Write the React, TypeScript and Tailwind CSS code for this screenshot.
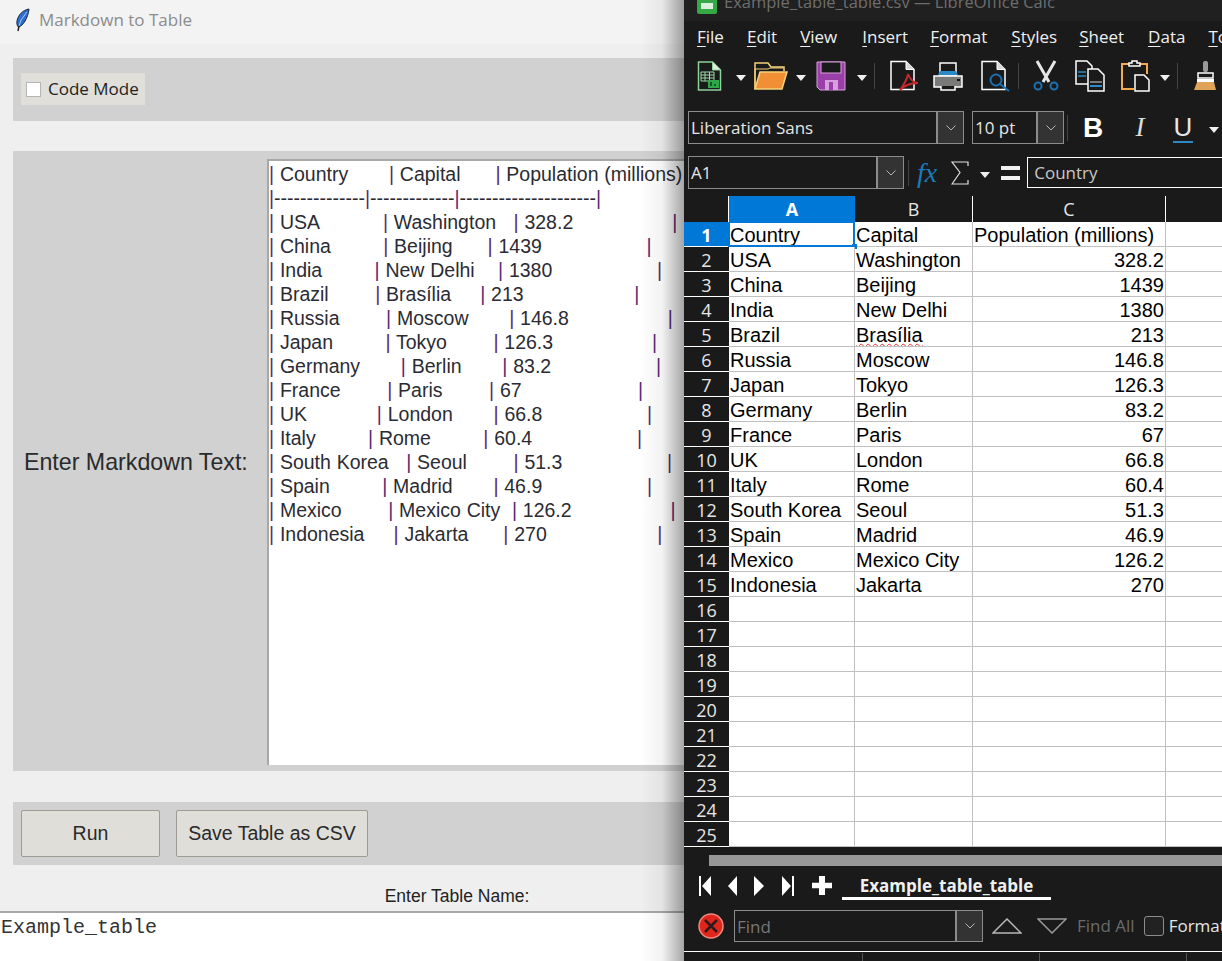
const sans = "font-['Liberation_Sans',Arial,sans-serif]"

const row = (a: string, b: string, c: string) =>
  `| ${a.padEnd(14)}| ${b.padEnd(13)}| ${c.padEnd(22)}|`

const data = [
  ["USA", "Washington", "328.2"],
  ["China", "Beijing", "1439"],
  ["India", "New Delhi", "1380"],
  ["Brazil", "Brasília", "213"],
  ["Russia", "Moscow", "146.8"],
  ["Japan", "Tokyo", "126.3"],
  ["Germany", "Berlin", "83.2"],
  ["France", "Paris", "67"],
  ["UK", "London", "66.8"],
  ["Italy", "Rome", "60.4"],
  ["South Korea", "Seoul", "51.3"],
  ["Spain", "Madrid", "46.9"],
  ["Mexico", "Mexico City", "126.2"],
  ["Indonesia", "Jakarta", "270"],
]

const lines = [
  row("Country", "Capital", "Population (millions)"),
  `|${"-".repeat(14)}|${"-".repeat(13)}|${"-".repeat(21)}|`,
  ...data.map(([a, b, c]) => row(a, b, c)),
]

function MdLine({ text }: { text: string }) {
  const parts = text.split("|")
  return (
    <div className="h-6 leading-6 whitespace-pre text-[19.5px] [word-spacing:0.4px] text-[#2b2b33]">
      {parts.map((p, i) => (
        <span key={i}>
          {i > 0 && <span className="text-[#5b2a72]">|</span>}
          {p}
        </span>
      ))}
    </div>
  )
}

function Feather() {
  return (
    <svg width="16" height="24" viewBox="0 0 16 24" className="shrink-0">
      <path d="M14 1C8 2 3 7 2 13c-.4 3 .2 5 1.500 6C8 18 13 10 14 1z" fill="#2f6fd0" stroke="#14213a" />
      <path d="M12 4 6 12l-2 6" stroke="#9cc4f4" fill="none" />
      <path d="M4 18 3 23" stroke="#222" strokeWidth="1.500" />
    </svg>
  )
}

function Arrow({ className }: { className?: string }) {
  return (
    <svg width="10" height="6" viewBox="0 0 10 6" className={`shrink-0 mt-1 ${className ?? ""}`}>
      <path d="M0 0h10L5 6z" fill="#f0f0f0" />
    </svg>
  )
}

function Chevron() {
  return (
    <div className="w-[27px] h-full bg-[#333333] border-l-2 border-[#8c8c8c] flex items-center justify-center shrink-0">
      <svg width="10" height="6" viewBox="0 0 10 6">
        <path d="M.5.500 5 5 9.500.500" stroke="#b5b5b5" fill="none" />
      </svg>
    </div>
  )
}

function Sep({ className }: { className?: string }) {
  return <div className={`w-px h-[26px] bg-[#444444] shrink-0 ${className ?? ""}`} />
}

function NewIcon() {
  return (
    <svg width="26" height="32" viewBox="0 0 26 32" className="shrink-0">
      <path d="M1.500 2h14l8 8v20h-22z" fill="#1a1a1a" stroke="#8ed19a" strokeWidth="1.500" />
      <path d="M15.500 2v8h8" fill="#dfeee0" stroke="#8ed19a" />
      <path d="M4 12h13v9H4zM4 15h13M4 18h13M8 12v9M12.500 12v9" fill="none" stroke="#9fd8a8" />
      <rect x="11" y="20" width="11" height="8" fill="#2ea84a" />
      <path d="M14 22v4M18 24v2" stroke="#0c3b18" strokeWidth="1.500" />
    </svg>
  )
}

function FolderIcon() {
  return (
    <svg width="34" height="30" viewBox="0 0 34 30" className="shrink-0">
      <path d="M1 28V2h13l3 4h13v4" fill="none" stroke="#f6d27a" strokeWidth="1.500" />
      <path d="M1 28V8h13l2-1h13" fill="none" stroke="#f6d27a" />
      <path d="M6 11h27l-5 17H1z" fill="#f18f36" stroke="#f6d27a" strokeWidth="1.500" />
    </svg>
  )
}

function SaveIcon() {
  return (
    <svg width="30" height="30" viewBox="0 0 30 30" className="shrink-0">
      <path d="M1 1h28v28H4l-3-3z" fill="#9b3fa8" stroke="#d9a0dd" />
      <rect x="5" y="1" width="20" height="11" fill="#1a1a1a" stroke="#d9a0dd" />
      <rect x="9" y="19" width="13" height="10" fill="#d79ee0" />
      <rect x="13" y="21" width="4" height="8" fill="#9b3fa8" />
    </svg>
  )
}

function PdfIcon() {
  return (
    <svg width="30" height="32" viewBox="0 0 30 32" className="shrink-0">
      <path d="M1 1.500h15l8 8v20H1z" fill="#1a1a1a" stroke="#fff" strokeWidth="1.500" />
      <path d="M16 1.500v8h8" fill="#d8d8d8" stroke="#fff" />
      <path d="M18 14c-1 6-5 12-8 16 4-4 10-7 18-7-5 0-8-4-10-9" fill="none" stroke="#c4282c" strokeWidth="2" />
    </svg>
  )
}

function PrintIcon() {
  return (
    <svg width="30" height="30" viewBox="0 0 30 30" className="shrink-0">
      <rect x="7" y="2" width="16" height="13" fill="#1a1a1a" stroke="#fff" strokeWidth="1.500" />
      <path d="M5 14 7 10h16l2 4z" fill="#2a8ac8" />
      <path d="M1 15h28v11H1z" fill="#7a7a78" stroke="#fff" strokeWidth="1.500" />
      <rect x="24" y="18" width="3" height="2" fill="#111" />
      <path d="M8 25v4h14v-4" fill="#1a1a1a" stroke="#fff" strokeWidth="1.500" />
    </svg>
  )
}

function PreviewIcon() {
  return (
    <svg width="30" height="32" viewBox="0 0 30 32" className="shrink-0">
      <path d="M1 1.500h15l8 8v20H1z" fill="#1a1a1a" stroke="#fff" strokeWidth="1.500" />
      <path d="M16 1.500v8h8" fill="#d8d8d8" stroke="#fff" />
      <circle cx="15" cy="20" r="5.500" fill="none" stroke="#1c6fb0" strokeWidth="2" />
      <path d="m19 24 9 7" stroke="#1c6fb0" strokeWidth="2" />
    </svg>
  )
}

function CutIcon() {
  return (
    <svg width="28" height="32" viewBox="0 0 28 32" className="shrink-0">
      <path d="M5 1l12 21M23 1 11 22" stroke="#e6e6e6" strokeWidth="3" />
      <circle cx="6" cy="26" r="3.500" fill="none" stroke="#1c6fb0" strokeWidth="2" />
      <circle cx="22" cy="26" r="3.500" fill="none" stroke="#1c6fb0" strokeWidth="2" />
    </svg>
  )
}

function CopyIcon() {
  return (
    <svg width="30" height="32" viewBox="0 0 30 32" className="shrink-0">
      <path d="M1 1h11l5 5v18H1z" fill="#1a1a1a" stroke="#fff" strokeWidth="1.500" />
      <path d="M3 12h8M3 16h8" stroke="#2a8ac8" strokeWidth="1.500" />
      <path d="M13 9h10l6 6v16H13z" fill="#1a1a1a" stroke="#fff" strokeWidth="1.500" />
      <path d="M15 22h12" stroke="#d8d8d8" />
      <path d="M15 26h12" stroke="#2a8ac8" strokeWidth="2" />
    </svg>
  )
}

function PasteIcon() {
  return (
    <svg width="30" height="32" viewBox="0 0 30 32" className="shrink-0">
      <path d="M8 4H1v25h12M19 4h7v10" fill="none" stroke="#f3a94c" strokeWidth="2" />
      <path d="M8 6V3h3V1h5v2h3v3z" fill="#1a1a1a" stroke="#fff" strokeWidth="1.500" />
      <path d="M14 15h9l5 5v11H14z" fill="#1a1a1a" stroke="#fff" strokeWidth="1.500" />
    </svg>
  )
}

function CloneIcon() {
  return (
    <svg width="24" height="32" viewBox="0 0 24 32" className="shrink-0">
      <rect x="9" y="1" width="5" height="11" rx="2" fill="#9a9a9a" />
      <path d="M4 13h15v5H4z" fill="#1a1a1a" stroke="#fff" strokeWidth="1.500" />
      <path d="M3 19h17v3H3z" fill="#fff" />
      <path d="M3 22h17l2 8H0z" fill="#e0a458" />
    </svg>
  )
}

function SumIcon() {
  return (
    <svg width="18" height="24" viewBox="0 0 18 24" className="ml-[14px] shrink-0">
      <path d="M17 5V1H1l8 10.500L1 23h16v-4" fill="none" stroke="#e0e0e0" strokeWidth="1.200" />
    </svg>
  )
}

function Combo({ label, className, dim }: { label: string; className: string; dim?: boolean }) {
  return (
    <div className={`flex items-center border border-[#8c8c8c] shrink-0 bg-[#1a1a1a] ${className}`}>
      <span className={`flex-1 pl-[2px] text-[17px] leading-none font-['Open_Sans',sans-serif] ${dim ? "text-[#777777]" : "text-[#e6e6e6]"}`}>
        {label}
      </span>
      <Chevron />
    </div>
  )
}

function Menu({ k, rest, className }: { k: string; rest: string; className: string }) {
  return (
    <span className={`whitespace-pre ${className}`}>
      <span className="underline underline-offset-[3px]">{k}</span>
      {rest}
    </span>
  )
}

function GridRow({ n, cells }: { n: number; cells: string[] }) {
  const selected = n === 1
  return (
    <div className={`grid grid-cols-[45px_126px_118px_193px_1fr] grid-rows-[25px] h-[25px] text-[20px] leading-[25px] text-black ${sans}`}>
      <div
        className={`pt-px text-center text-[18px] font-['Open_Sans',sans-serif] border-b border-white ${
          selected ? "bg-[#0078d7] text-white font-bold" : "bg-[#1a1a1a] text-[#e6e6e6]"
        }`}
      >
        {n}
      </div>
      <div className="relative bg-white pt-px pl-px border-r border-b border-[#c0c0c0] whitespace-pre">
        {selected && <div className="absolute -left-px -top-px w-[127px] h-[26px] border-2 border-[#0078d7]" />}
        {selected && <div className="absolute -right-[3px] -bottom-[3px] w-[5px] h-[5px] bg-[#0078d7]" />}
        {cells[0]}
      </div>
      <div className="bg-white pt-px pl-px border-r border-b border-[#c0c0c0] whitespace-pre overflow-hidden">
        {cells[1] === "Brasília" ? (
          <span className="underline decoration-wavy decoration-[#e03030] decoration-1">{cells[1]}</span>
        ) : (
          cells[1]
        )}
      </div>
      <div className={`bg-white pt-px px-px border-r border-b border-[#c0c0c0] whitespace-pre overflow-hidden ${selected ? "text-left" : "text-right"}`}>
        {cells[2]}
      </div>
      <div className="bg-white border-b border-[#c0c0c0]" />
    </div>
  )
}

export default function App() {
  const rows = Array.from({ length: 25 }, (_, i) => {
    if (i === 0) return ["Country", "Capital", "Population (millions)"]
    return data[i - 1] ?? ["", "", ""]
  })

  return (
    <div className={`relative w-[1222px] h-[961px] flex overflow-hidden bg-[#efefef] ${sans}`}>
      {/* Tk window */}
      <div className="w-[684px] h-full flex flex-col shrink-0 overflow-hidden">
        <div className="h-[44px] bg-[#f3f3f3] flex items-center pl-[15px] pb-[5px] gap-2 shrink-0">
          <Feather />
          <span className="text-[17px] text-[#8b8b8b] font-['Open_Sans',sans-serif]">Markdown to Table</span>
        </div>

        <div className="mt-[14px] ml-[13px] h-[63px] bg-[#d1d1d1] flex items-center pl-2 pb-px shrink-0">
          <div className="h-[32px] w-[124px] bg-[#e0dfd9] flex items-center pl-[5px] gap-[7px]">
            <div className="w-[15px] h-[15px] bg-white border border-[#b5b5b5]" />
            <span className="text-[17px] whitespace-nowrap text-[#222222] font-['Open_Sans',sans-serif]">Code Mode</span>
          </div>
        </div>

        <div className="mt-[30px] ml-[13px] h-[620px] bg-[#d1d1d1] flex shrink-0">
          <div className="w-[254px] flex items-center pl-[11px] shrink-0 pt-[2px]">
            <span className="text-[23.2px] whitespace-nowrap text-[#2a2a2a]">Enter Markdown Text:</span>
          </div>
          <div className="mt-2 h-[606px] flex-1 bg-white border-t-2 border-l-2 border-[#a8a8a8] pt-px overflow-hidden">
            {lines.map((l, i) => (
              <MdLine key={i} text={l} />
            ))}
          </div>
        </div>

        <div className="mt-[31px] ml-[13px] h-[63px] bg-[#d1d1d1] flex items-center pl-2 gap-4 shrink-0">
          <button className="w-[139px] h-[47px] pt-px bg-[#e0ded9] border border-[#9d9b94] rounded-[2px] text-[19.5px] text-[#2a2a2a]">
            Run
          </button>
          <button className="w-[192px] h-[47px] pt-px bg-[#e0ded9] border border-[#9d9b94] rounded-[2px] text-[19.5px] text-[#2a2a2a] whitespace-nowrap">
            Save Table as CSV
          </button>
        </div>

        <div className="h-[46px] flex items-center justify-center pt-[17px] pl-[230px] shrink-0 text-[17.5px] text-[#222222]">
          Enter Table Name:
        </div>
        <div className="flex-1 bg-white border-t-2 border-[#a8a8a8] pl-px pt-[3px] font-['Liberation_Mono',monospace] text-[20px] leading-6 text-[#333333]">
          Example_table
        </div>
      </div>

      {/* shadow of the Calc window on the Tk window */}
      <div className="absolute left-[640px] top-0 w-[44px] h-full bg-gradient-to-r from-transparent via-black/5 to-black/35" />

      {/* Calc window */}
      <div className="flex-1 h-full bg-[#1a1a1a] flex flex-col overflow-hidden font-['Open_Sans',sans-serif]">
        <div className="h-[21px] bg-[#202020] shrink-0 flex items-end overflow-hidden pl-[13px]">
          <div className="h-[24px] mb-[-2px] flex items-center gap-[7px] relative top-[-9px]">
            <div className="w-[20px] h-[24px] rounded-[2px] bg-[#35a946] flex items-end justify-center pb-[5px]">
              <div className="w-[12px] h-[6px] bg-[#d8f0dc]" />
            </div>
            <span className="text-[16.5px] text-[#6e6e6e] whitespace-pre">Example_table_table.csv — LibreOffice Calc</span>
          </div>
        </div>

        <div className="h-[32px] shrink-0 flex items-center text-[17px] text-[#f0f0f0] pl-[13px] whitespace-nowrap">
          <Menu k="F" rest="ile" className="" />
          <Menu k="E" rest="dit" className="ml-[23px]" />
          <Menu k="V" rest="iew" className="ml-[23px]" />
          <Menu k="I" rest="nsert" className="ml-[25px]" />
          <Menu k="F" rest="ormat" className="ml-[22px]" />
          <Menu k="S" rest="tyles" className="ml-[24px]" />
          <Menu k="S" rest="heet" className="ml-[22px]" />
          <Menu k="D" rest="ata" className="ml-[24px]" />
          <Menu k="T" rest="ools" className="ml-[23px]" />
        </div>

        <div className="mt-[7px] h-[32px] shrink-0 flex items-center pl-[13px]">
          <NewIcon />
          <Arrow className="ml-[13px]" />
          <div className="ml-[8px]"><FolderIcon /></div>
          <Arrow className="ml-[8px]" />
          <div className="ml-[10px]"><SaveIcon /></div>
          <Arrow className="ml-[11px]" />
          <Sep className="ml-[7px]" />
          <div className="ml-[15px]"><PdfIcon /></div>
          <div className="ml-[13px]"><PrintIcon /></div>
          <div className="ml-[18px]"><PreviewIcon /></div>
          <Sep className="ml-[7px]" />
          <div className="ml-[13px]"><CutIcon /></div>
          <div className="ml-[15px]"><CopyIcon /></div>
          <div className="ml-[16px]"><PasteIcon /></div>
          <Arrow className="ml-[9px]" />
          <Sep className="ml-[7px]" />
          <div className="ml-[16px]"><CloneIcon /></div>
        </div>

        <div className="mt-[19px] h-[33px] shrink-0 flex items-center pl-1">
          <Combo label="Liberation Sans" className="w-[276px] h-full" />
          <Combo label="10 pt" className="w-[92px] h-full ml-2" />
          <Sep className="ml-[3px]" />
          <span className={`ml-[15px] w-[20px] text-center text-[28px] font-bold text-white ${sans}`}>B</span>
          <span className="ml-[27px] w-[20px] text-center text-[27px] italic text-[#dddddd] font-['Liberation_Serif',serif]">I</span>
          <span className={`ml-[23px] w-[20px] text-center text-[26px] leading-[28px] text-[#e6e6e6] border-b-2 border-[#2a8ac8] ${sans}`}>U</span>
          <Arrow className="ml-[16px]" />
        </div>

        <div className="mt-[12px] h-[33px] shrink-0 flex items-center pl-1">
          <Combo label="A1" className="w-[216px] h-full" />
          <Sep className="ml-[4px]" />
          <span className="ml-[8px] w-[24px] text-[28px] leading-none italic text-[#1c7ab8] font-['Liberation_Serif',serif]">fx</span>
          <SumIcon />
          <Arrow className="ml-[11px]" />
          <div className="ml-[11px] w-[19px] h-[14px] border-y-[4px] border-[#f0f0f0] shrink-0" />
          <div className="ml-[7px] w-[300px] shrink-0 h-[31px] border border-white pl-[6px] flex items-center text-[17px] text-[#c8c8c8]">
            Country
          </div>
        </div>

        <div className="mt-[7px] h-[26px] shrink-0 grid grid-cols-[45px_126px_118px_193px_1fr] text-[18px] leading-[26px] text-center text-[#e6e6e6]">
          <div className="border-r border-white" />
          <div className="bg-[#0078d7] text-white font-bold">A</div>
          <div className="border-r border-white">B</div>
          <div className="border-r border-white">C</div>
          <div />
        </div>

        <div className="shrink-0 h-[625px] overflow-hidden">
          {rows.map((cells, i) => (
            <GridRow key={i} n={i + 1} cells={cells} />
          ))}
        </div>

        <div className="mt-2 ml-[25px] h-[11px] bg-[#979797] shrink-0" />

        <div className="mt-[7px] h-[27px] shrink-0 flex items-start pl-[15px] relative">
          <svg width="150" height="20" viewBox="0 0 150 20" className="shrink-0 mt-[3px] text-white" fill="currentColor">
            <path d="M0 0h2v20H0zM12 0v20L3 10z" />
            <path d="M38 0v20L29 10z" />
            <path d="M55 0v20l10-10z" />
            <path d="M83 0v20l9-10zM93 0h2v20h-2z" />
            <path d="M120 7h7V0h6v7h7v6h-7v7h-6v-7h-7z" transform="translate(-7 0) scale(1 .95)" />
          </svg>
          <div className="absolute left-[158px] top-0 w-[209px] h-[27px] border-b-[3px] border-white text-center text-[17px] leading-[26px] font-bold text-[#f0f0f0]">
            Example_table_table
          </div>
        </div>

        <div className="mt-[10px] h-[32px] shrink-0 flex items-center pl-[14px]">
          <svg width="26" height="26" viewBox="0 0 26 26" className="shrink-0">
            <circle cx="13" cy="13" r="12" fill="#e0261c" stroke="#f08a80" strokeWidth="1.500" />
            <path d="m7 7 12 12M19 7 7 19" stroke="#2a1a1a" strokeWidth="2.500" />
          </svg>
          <div className="ml-[10px]">
            <Combo label="Find" className="w-[249px] h-[32px]" dim />
          </div>
          <svg width="30" height="16" viewBox="0 0 30 16" className="ml-[9px] shrink-0">
            <path d="M1 15h28L15 1z" fill="none" stroke="#b8b8b8" strokeWidth="1.500" />
          </svg>
          <svg width="30" height="16" viewBox="0 0 30 16" className="ml-[15px] shrink-0">
            <path d="M1 1h28L15 15z" fill="none" stroke="#9a9a9a" strokeWidth="1.500" />
          </svg>
          <span className="ml-[10px] text-[17px] text-[#6a6a6a] whitespace-nowrap">Find All</span>
          <div className="ml-[9px] w-[20px] h-[20px] border border-[#8c8c8c] rounded-[3px] shrink-0 bg-[#222222]" />
          <span className="ml-[5px] text-[17px] text-[#e6e6e6] whitespace-nowrap">Formatted</span>
        </div>

        <div className="mt-[9px] flex-1 border-t border-white flex pt-px">
          <div className="ml-[178px] w-px h-full bg-[#555555]" />
          <div className="ml-[176px] w-px h-full bg-[#555555]" />
          <div className="ml-[146px] w-px h-full bg-[#555555]" />
        </div>
      </div>
    </div>
  )
}
